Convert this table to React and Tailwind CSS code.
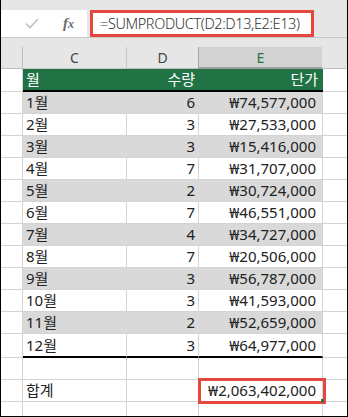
import React from 'react';

const rows = [
    ['1월', 6, '₩74,577,000'],
    ['2월', 3, '₩27,533,000'],
    ['3월', 3, '₩15,416,000'],
    ['4월', 7, '₩31,707,000'],
    ['5월', 2, '₩30,724,000'],
    ['6월', 7, '₩46,551,000'],
    ['7월', 4, '₩34,727,000'],
    ['8월', 7, '₩20,506,000'],
    ['9월', 3, '₩56,787,000'],
    ['10월', 3, '₩41,593,000'],
    ['11월', 2, '₩52,659,000'],
    ['12월', 3, '₩64,977,000'],
];

const font = { fontFamily: '"Noto Sans", "Noto Sans CJK KR", sans-serif' };

const DataRow = ({ month, qty, price, shaded, last }) => {
    const h = last ? 'h-[24px]' : 'h-[22px]';
    const body = last ? 'border-b-2 border-b-black' : 'border-b border-b-[#d4d4d4]';
    const bg = shaded ? 'bg-[#d9d9d9]' : 'bg-white';
    const sep = shaded ? 'border-r-[#d9d9d9]' : 'border-r-[#d4d4d4]';
    return (
        <div className={`flex ${h}`}>
            <div className="w-[22px] border-b border-r border-[#d4d4d4]" />
            <div className={`w-[104px] ${bg} ${body} border-r ${sep} flex items-center pl-[3px]`}>{month}</div>
            <div className={`w-[72px] ${bg} ${body} border-r ${sep} flex items-center justify-end pr-[3px]`}>{qty}</div>
            <div className={`w-[124px] ${bg} ${body} border-r border-r-[#d4d4d4] flex items-center justify-end pr-[6px]`}>{price}</div>
            <div className="w-[24px] border-b border-[#d4d4d4]" />
        </div>
    );
};

const BlankRow = ({ left = '', right = '' }) => (
    <div className="flex h-[22px]">
        <div className="w-[22px] border-b border-r border-[#d4d4d4]" />
        <div className="w-[104px] border-b border-r border-[#d4d4d4] flex items-center pl-[3px]">{left}</div>
        <div className="w-[72px] border-b border-r border-[#d4d4d4]" />
        <div className="w-[124px] border-b border-r border-[#d4d4d4] flex items-center justify-end pr-[6px]">{right}</div>
        <div className="w-[24px] border-b border-[#d4d4d4]" />
    </div>
);

export default function App() {
    return (
        <div
            className="relative w-[348px] h-[417px] bg-white border-l border-r border-b border-black overflow-hidden text-[15px] text-[#222]"
            style={font}
        >
            {/* Formula bar */}
            <div className="h-[47px] bg-[#e6e6e6] pt-[10px]">
                <div className="flex h-[27px]">
                    <div className="w-[86px] bg-white flex items-center">
                        <svg width="14" height="11" viewBox="0 0 14 11" className="ml-[24px]">
                            <polyline points="1,5.5 5,9.5 13,1" fill="none" stroke="#c2c2c2" strokeWidth="1.6" />
                        </svg>
                        <span
                            className="ml-[24px] text-[15px] italic font-bold text-[#6a6a6a]"
                            style={{ fontFamily: '"Liberation Serif", serif' }}
                        >
                            f<span className="text-[12px]">x</span>
                        </span>
                    </div>
                    <div className="ml-[3px] w-[224px] bg-white border-[3px] border-[#e5463e] flex items-center pl-[7px] text-[14.5px] font-light text-[#333] tracking-[-0.4px] whitespace-nowrap">
                        =SUMPRODUCT(D2:D13,E2:E13)
                    </div>
                </div>
                <div className="h-px bg-[#c8c8c8]" />
            </div>

            {/* Column headers */}
            <div className="flex h-[22px] bg-[#e6e6e6] text-[14px]">
                <div className="w-[22px] border-b border-r border-b-[#bdbdbd] border-r-[#bdbdbd]" />
                <div className="w-[104px] border-b border-r border-[#c8c8c8] flex items-center justify-center text-[#444]">C</div>
                <div className="w-[72px] border-b border-r border-b-[#bdbdbd] border-r-[#c8c8c8] flex items-center justify-center text-[#444]">D</div>
                <div className="w-[124px] bg-[#d2d2d2] border-b-2 border-b-[#9e9e9e] border-l border-l-[#a8a8a8] -ml-px flex items-center justify-center text-[#217346]">E</div>
                <div className="w-[24px] border-b border-b-[#bdbdbd]" />
            </div>

            {/* Green header */}
            <div className="flex h-[23px]">
                <div className="w-[22px] border-b border-r border-[#d4d4d4]" />
                <div className="w-[300px] bg-[#217346] border-b-2 border-b-black flex text-white">
                    <div className="w-[104px] flex items-center pl-[3px]">월</div>
                    <div className="w-[72px] flex items-center justify-end pr-[4px]">수량</div>
                    <div className="w-[124px] flex items-center justify-end pr-[5px]">단가</div>
                </div>
                <div className="w-[24px] border-b border-[#d4d4d4]" />
            </div>

            {rows.map((r, i) => (
                <DataRow
                    key={r[0]}
                    month={r[0]}
                    qty={r[1]}
                    price={r[2]}
                    shaded={i % 2 === 0}
                    last={i === rows.length - 1}
                />
            ))}

            <BlankRow />
            <BlankRow left="합계" right="₩2,063,402,000" />
            <BlankRow />

            {/* Selected total cell */}
            <div className="absolute left-[197px] top-[378px] w-[128px] h-[26px] border-[3px] border-[#e5463e]" />
            <div className="absolute left-[320px] top-[399px] w-[3px] h-[3px] bg-[#217346]" />
        </div>
    );
}
